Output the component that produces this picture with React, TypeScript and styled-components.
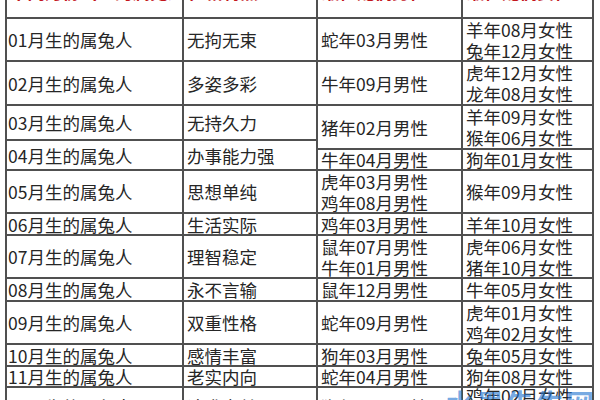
import styled, { createGlobalStyle } from 'styled-components'

const GlobalStyle = createGlobalStyle`
    html, body {
        margin: 0;
        padding: 0;
        background: #ffffff;
        overflow: hidden;
    }
    body {
        font-family: "Noto Sans CJK SC", "Noto Sans", sans-serif;
    }
`

type Cell = {
    col: number
    row: number
    span?: number
    lines: string[]
}

// grid tracks: header, 01, 02, 03, (03/04 split), 04, 05 ... 12
const rowTracks = [40, 41, 42, 33, 7, 19, 41, 20, 41, 21, 41, 20, 19, 36]

const headers = ['不同月份出生的属兔人', '性格特点', '最佳配偶男性', '最佳配偶女性']

const body: Cell[] = [
    { col: 1, row: 2, lines: ['01月生的属兔人'] },
    { col: 2, row: 2, lines: ['无拘无束'] },
    { col: 3, row: 2, lines: ['蛇年03月男性'] },
    { col: 4, row: 2, lines: ['羊年08月女性', '兔年12月女性'] },

    { col: 1, row: 3, lines: ['02月生的属兔人'] },
    { col: 2, row: 3, lines: ['多姿多彩'] },
    { col: 3, row: 3, lines: ['牛年09月男性'] },
    { col: 4, row: 3, lines: ['虎年12月女性', '龙年08月女性'] },

    { col: 1, row: 4, lines: ['03月生的属兔人'] },
    { col: 2, row: 4, lines: ['无持久力'] },
    { col: 3, row: 4, span: 2, lines: ['猪年02月男性'] },
    { col: 4, row: 4, span: 2, lines: ['羊年09月女性', '猴年06月女性'] },

    { col: 1, row: 5, span: 2, lines: ['04月生的属兔人'] },
    { col: 2, row: 5, span: 2, lines: ['办事能力强'] },
    { col: 3, row: 6, lines: ['牛年04月男性'] },
    { col: 4, row: 6, lines: ['狗年01月女性'] },

    { col: 1, row: 7, lines: ['05月生的属兔人'] },
    { col: 2, row: 7, lines: ['思想单纯'] },
    { col: 3, row: 7, lines: ['虎年03月男性', '鸡年08月男性'] },
    { col: 4, row: 7, lines: ['猴年09月女性'] },

    { col: 1, row: 8, lines: ['06月生的属兔人'] },
    { col: 2, row: 8, lines: ['生活实际'] },
    { col: 3, row: 8, lines: ['鸡年03月男性'] },
    { col: 4, row: 8, lines: ['羊年10月女性'] },

    { col: 1, row: 9, lines: ['07月生的属兔人'] },
    { col: 2, row: 9, lines: ['理智稳定'] },
    { col: 3, row: 9, lines: ['鼠年07月男性', '牛年01月男性'] },
    { col: 4, row: 9, lines: ['虎年06月女性', '猪年10月女性'] },

    { col: 1, row: 10, lines: ['08月生的属兔人'] },
    { col: 2, row: 10, lines: ['永不言输'] },
    { col: 3, row: 10, lines: ['鼠年12月男性'] },
    { col: 4, row: 10, lines: ['牛年05月女性'] },

    { col: 1, row: 11, lines: ['09月生的属兔人'] },
    { col: 2, row: 11, lines: ['双重性格'] },
    { col: 3, row: 11, lines: ['蛇年09月男性'] },
    { col: 4, row: 11, lines: ['虎年01月女性', '鸡年02月女性'] },

    { col: 1, row: 12, lines: ['10月生的属兔人'] },
    { col: 2, row: 12, lines: ['感情丰富'] },
    { col: 3, row: 12, lines: ['狗年03月男性'] },
    { col: 4, row: 12, lines: ['兔年05月女性'] },

    { col: 1, row: 13, lines: ['11月生的属兔人'] },
    { col: 2, row: 13, lines: ['老实内向'] },
    { col: 3, row: 13, lines: ['蛇年04月男性'] },
    { col: 4, row: 13, lines: ['狗年08月女性'] },

    { col: 1, row: 14, lines: ['12月生的属兔人'] },
    { col: 2, row: 14, lines: ['追求完美'] },
    { col: 3, row: 14, lines: ['猴年06月男性'] },
    { col: 4, row: 14, lines: ['鸡年02月女性', '龙年05月女性'] },
]

export default function App() {
    return (
        <Page>
            <GlobalStyle />
            <Table>
                {headers.map((h, i) => (
                    <HeaderCell key={h} $col={i + 1}>
                        {h}
                    </HeaderCell>
                ))}
                {body.map(c => (
                    <BodyCell key={`${c.col}-${c.row}`} $col={c.col} $row={c.row} $span={c.span ?? 1} $first={c.col === 1}>
                        {c.lines.map(l => (
                            <Line key={l}>{l}</Line>
                        ))}
                    </BodyCell>
                ))}
            </Table>
            <Watermark>水墨先生网</Watermark>
        </Page>
    )
}

const Page = styled.div`
    position: relative;
    width: 600px;
    height: 400px;
    overflow: hidden;
    background: #ffffff;
`

const Table = styled.div`
    display: grid;
    grid-template-columns: 175px 132px 143px 129px;
    grid-template-rows: ${rowTracks.map(t => `${t}px`).join(' ')};
    gap: 2px;
    padding: 2px;
    width: fit-content;
    margin: -25px 0 0 5px;
    background: #505050;
`

const HeaderCell = styled.div<{ $col: number }>`
    grid-column: ${p => p.$col};
    grid-row: 1;
    display: flex;
    align-items: center;
    padding: 0 0 12px ${p => (p.$col === 1 ? 3 : 4)}px;
    background: #ffffff;
    color: #c3161c;
    font-size: 17.5px;
    font-weight: 700;
    line-height: 21px;
    white-space: nowrap;
    overflow: hidden;
`

const BodyCell = styled.div<{ $col: number; $row: number; $span: number; $first: boolean }>`
    grid-column: ${p => p.$col};
    grid-row: ${p => p.$row} / span ${p => p.$span};
    display: flex;
    flex-direction: column;
    justify-content: center;
    padding-left: ${p => (p.$first ? 1 : 3)}px;
    background: #ffffff;
    color: #262626;
    font-size: 17.5px;
    line-height: 21px;
    white-space: nowrap;
`

const Line = styled.div`
    height: 21px;
`

const Watermark = styled.div`
    position: absolute;
    left: 446px;
    top: 383px;
    font-family: "Noto Sans CJK SC", sans-serif;
    font-size: 28px;
    font-weight: 700;
    letter-spacing: 2px;
    color: rgba(40, 120, 210, 0.65);
    white-space: nowrap;
`
